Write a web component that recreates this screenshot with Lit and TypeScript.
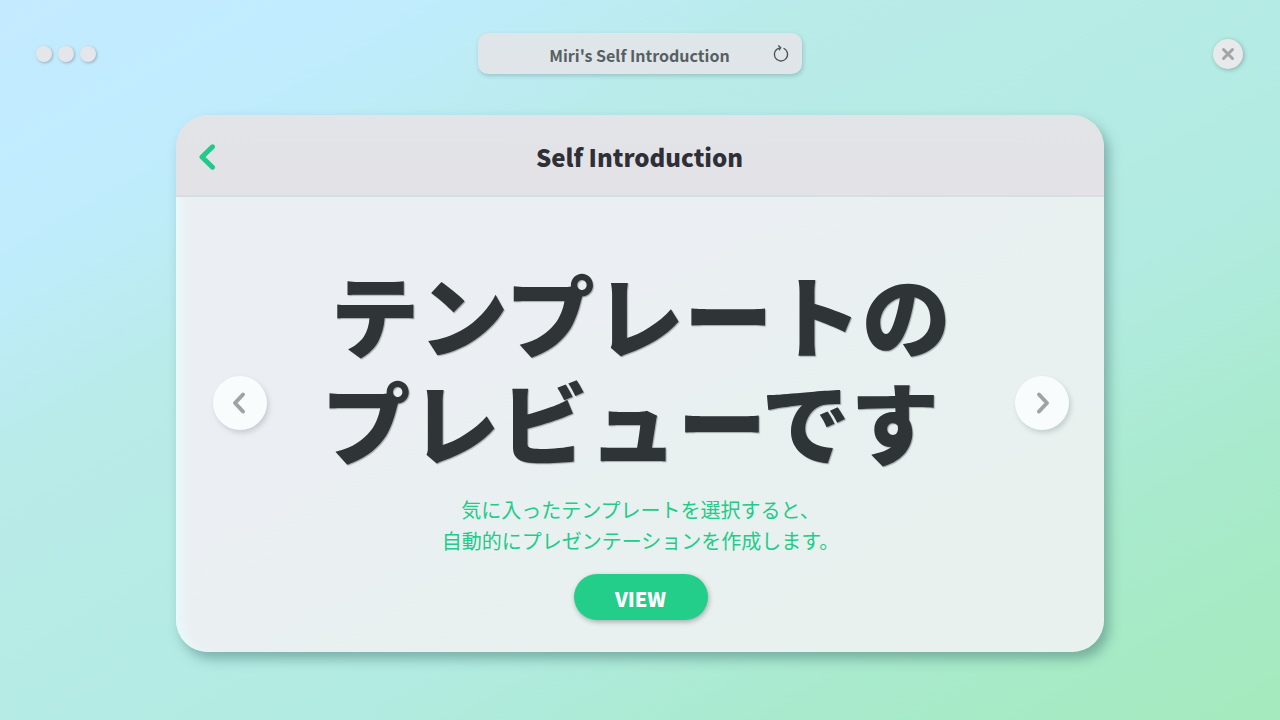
import { LitElement, html, css, svg } from "lit";
import { customElement } from "lit/decorators.js";

const chevronLeft = svg`<path d="M12 5.5 L4 14 L12 22.5" />`;
const chevronRight = svg`<path d="M6 5.5 L14 14 L6 22.5" />`;

@customElement("app-root")
export class AppRoot extends LitElement {
  static styles = css`
    :host {
      display: flex;
      flex-direction: column;
      box-sizing: border-box;
      min-height: 100vh;
      padding: 33px 37px 68px 36px;
      background: linear-gradient(150deg, #c4eaff 0%, #c0ecfe 16%, #b9ebe8 33%, #b2ebe2 62%, #a8eacb 82%, #a4eabd 100%);
      font-family: "Noto Sans CJK JP", "Noto Sans", sans-serif;
      color: #2f3437;
    }
    * { box-sizing: border-box; }
    button {
      font: inherit;
      border: 0;
      padding: 0;
      cursor: pointer;
      background: none;
      display: flex;
      align-items: center;
      justify-content: center;
    }
    svg {
      display: block;
      fill: none;
      stroke: currentColor;
      stroke-linecap: round;
      stroke-linejoin: round;
    }
    .topbar {
      display: grid;
      grid-template-columns: 1fr minmax(0, 324px) 1fr;
      align-items: center;
      margin-bottom: 41px;
    }
    .dots { display: flex; gap: 6px; }
    .dot {
      width: 16px;
      height: 16px;
      border-radius: 50%;
      background: #e5e6ea;
      box-shadow: 1px 1px 3px rgba(70, 90, 90, 0.4);
    }
    .address {
      display: grid;
      grid-template-columns: 1fr auto 1fr;
      align-items: center;
      height: 41px;
      padding: 0 12px;
      border-radius: 10px;
      background: #dfe5e8;
      box-shadow: 1px 2px 4px rgba(70, 110, 110, 0.3);
      color: #566062;
      font-size: 16px;
      line-height: 24px;
      font-weight: 700;
    }
    .address-text { grid-column: 2; padding-top: 2px; }
    .reload { justify-self: end; color: #4b5456; }
    .close {
      justify-self: end;
      width: 30px;
      height: 30px;
      border-radius: 50%;
      background: #e7e9eb;
      box-shadow: 1px 1px 4px rgba(70, 90, 90, 0.4);
      color: #a2a5a5;
    }
    .card {
      display: flex;
      flex-direction: column;
      flex: 1;
      align-self: center;
      width: 100%;
      max-width: 928px;
      border-radius: 32px;
      box-shadow: 5px 7px 12px rgba(70, 120, 115, 0.5);
    }
    .card-header {
      display: grid;
      grid-template-columns: 1fr auto 1fr;
      align-items: center;
      height: 82px;
      padding: 4px 22px 0;
      border-radius: 32px 32px 0 0;
      background: linear-gradient(180deg, #e2e4e7, #e3e2e7);
      border-bottom: 2px solid #d8dde1;
    }
    .card-title {
      margin: 0;
      font-size: 24px;
      line-height: 36px;
      font-weight: 900;
      color: #2f3037;
    }
    .back { justify-self: start; color: #21c98a; }
    .card-body {
      display: grid;
      grid-template-columns: auto 1fr auto;
      align-items: center;
      flex: 1;
      padding: 0 35px 0 37px;
      border-radius: 0 0 32px 32px;
      background: linear-gradient(150deg, #ebeff3 0%, #ebeff3 35%, #e8f1ef 65%, #e9f1ee 100%);
      box-shadow: inset 12px 0 10px -6px #e9f9fb;
    }
    .step {
      width: 54px;
      height: 54px;
      margin-bottom: 43px;
      border-radius: 50%;
      background: #f8fcfc;
      box-shadow: 2px 3px 5px rgba(90, 110, 110, 0.25);
      color: #a0a3a4;
    }
    .content {
      display: flex;
      flex-direction: column;
      align-items: center;
      padding-top: 29px;
      text-align: center;
    }
    .headline {
      margin: 0;
      font-size: 89px;
      line-height: 107px;
      font-weight: 900;
      white-space: nowrap;
      text-shadow: 1px 1px 1px rgba(60, 70, 70, 0.4);
    }
    .lead {
      margin: 21px 0 18px;
      font-size: 20px;
      line-height: 31px;
      font-weight: 400;
      color: #21cb8a;
      white-space: nowrap;
    }
    .view {
      width: 134px;
      height: 46px;
      padding-top: 4px;
      border-radius: 23px;
      background: #23ce8b;
      box-shadow: 1px 2px 5px rgba(80, 90, 90, 0.45);
      color: #fff;
      font-size: 20px;
      line-height: 32px;
      font-weight: 900;
    }
  `;

  render() {
    return html`
      <header class="topbar">
        <div class="dots">
          <span class="dot"></span><span class="dot"></span><span class="dot"></span>
        </div>
        <div class="address">
          <span class="address-text">Miri's Self Introduction</span>
          <button class="reload" aria-label="Reload">
            <svg width="18" height="18" viewBox="0 0 18 18" stroke-width="1.3">
              <path d="M8.2 2.8 A6.6 6.6 0 1 0 12 3.5" />
              <path d="M6.6 0.8 L8.8 2.7 L7.2 4.8" />
            </svg>
          </button>
        </div>
        <button class="close" aria-label="Close">
          <svg width="14" height="14" viewBox="0 0 14 14" stroke-width="3">
            <path d="M2.5 2.5 L11.5 11.5 M11.5 2.5 L2.5 11.5" />
          </svg>
        </button>
      </header>
      <main class="card">
        <div class="card-header">
          <button class="back" aria-label="Back">
            <svg width="18" height="28" viewBox="0 0 18 28" stroke-width="5">
              <path d="M14.5 3.8 L4 14 L14.5 24.2" />
            </svg>
          </button>
          <h2 class="card-title">Self Introduction</h2>
        </div>
        <div class="card-body">
          <button class="step" aria-label="Previous">
            <svg width="18" height="28" viewBox="0 0 18 28" stroke-width="4">${chevronLeft}</svg>
          </button>
          <div class="content">
            <h1 class="headline">テンプレートの<br />プレビューです&nbsp;</h1>
            <p class="lead">気に入ったテンプレートを選択すると、<br />自動的にプレゼンテーションを作成します。</p>
            <button class="view">VIEW</button>
          </div>
          <button class="step" aria-label="Next">
            <svg width="18" height="28" viewBox="0 0 18 28" stroke-width="4">${chevronRight}</svg>
          </button>
        </div>
      </main>
    `;
  }
}
